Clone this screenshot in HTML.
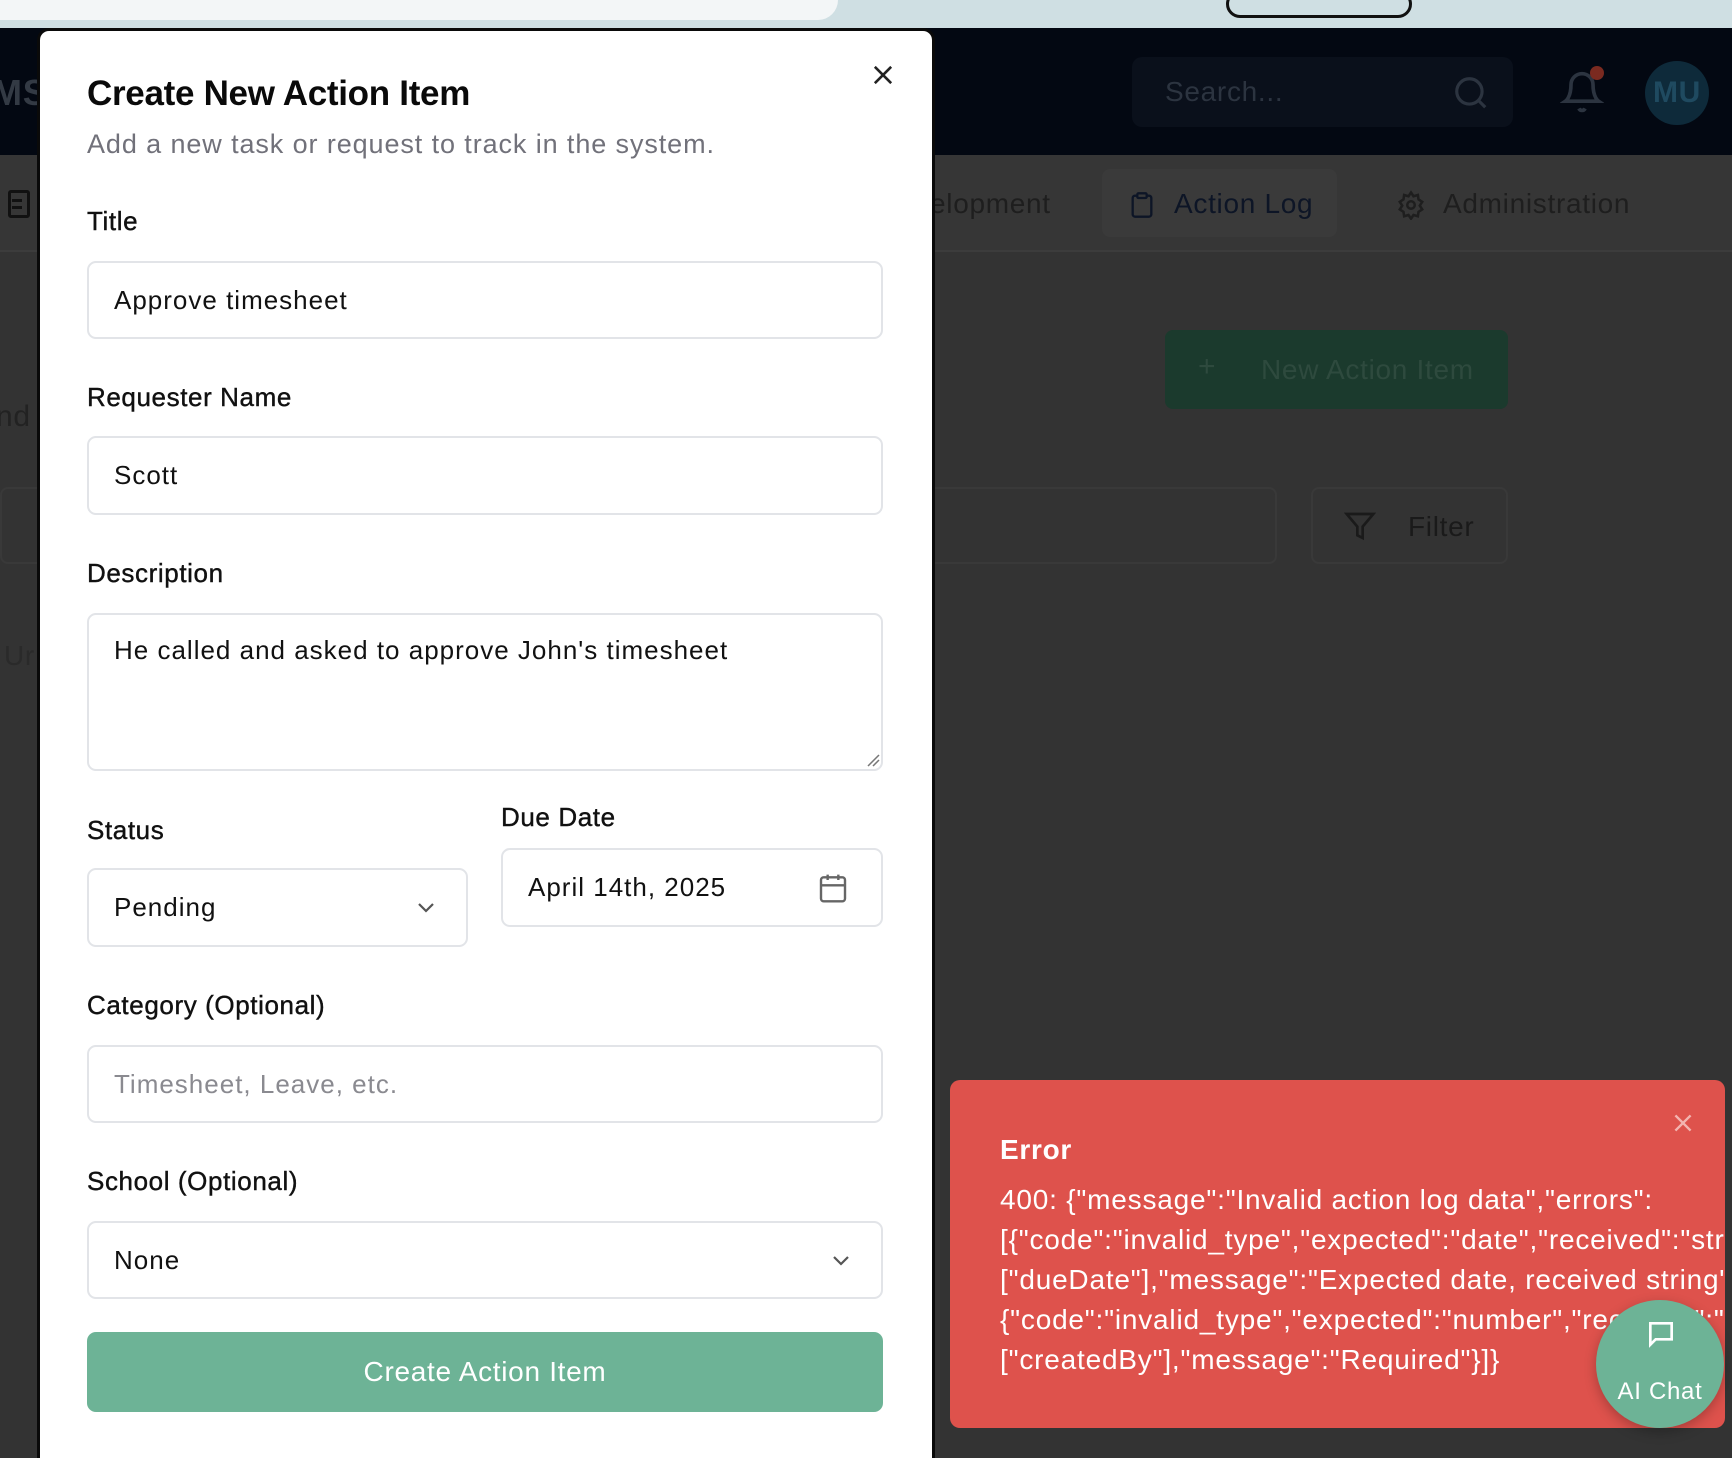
<!DOCTYPE html>
<html><head><meta charset="utf-8"><style>
*{box-sizing:border-box;margin:0;padding:0}
html{width:1732px;height:1458px;overflow:hidden}
body{width:1732px;height:1458px;overflow:hidden;background:#333;font-family:"Liberation Sans",sans-serif;position:relative;letter-spacing:0.7px}
.abs{position:absolute}
.lbl{position:absolute;left:87px;font-size:26px;font-weight:500;color:#111;letter-spacing:0.6px;-webkit-text-stroke:0.4px #111}
.inp{position:absolute;border:2px solid #e2e4e8;border-radius:9px;background:#fff;font-size:26px;color:#111;padding-left:25px;display:flex;align-items:center;letter-spacing:1px}
</style></head><body>
<!-- browser bar -->
<div class="abs" style="left:0;top:0;width:1732px;height:28px;background:#cfdfe3"></div>
<div class="abs" style="left:0;top:0;width:838px;height:20px;background:#f3f6f7;border-radius:0 0 20px 0"></div>
<div class="abs" style="left:1226px;top:-10px;width:186px;height:28px;border:3px solid #111;border-radius:14px"></div>
<!-- header -->
<div class="abs" style="left:0;top:28px;width:1732px;height:127px;background:#030812"></div>
<div class="abs" style="left:-8px;top:72px;font-size:36px;color:#333a44;font-weight:bold">MS</div>
<div class="abs" style="left:1132px;top:57px;width:381px;height:70px;background:#0a101b;border-radius:10px"></div>
<div class="abs" style="left:1165px;top:76px;font-size:28px;color:#2c3440">Search...</div>
<svg class="abs" style="left:1452px;top:74px" width="38" height="38" viewBox="0 0 24 24" fill="none" stroke="#2c3440" stroke-width="2"><circle cx="11" cy="11" r="8"/><path d="M21 21l-4.3-4.3"/></svg>
<svg class="abs" style="left:1560px;top:70px" width="44" height="44" viewBox="0 0 24 24" fill="none" stroke="#2c3440" stroke-width="2"><path d="M6 8a6 6 0 0 1 12 0c0 7 3 9 3 9H3s3-2 3-9"/><path d="M10.3 21a1.9 1.9 0 0 0 3.4 0"/></svg>
<div class="abs" style="left:1590px;top:66px;width:14px;height:14px;border-radius:50%;background:#7a2a20"></div>
<div class="abs" style="left:1645px;top:61px;width:64px;height:64px;border-radius:50%;background:#0e2a3a;color:#1f4a60;font-size:30px;font-weight:bold;display:flex;align-items:center;justify-content:center">MU</div>
<!-- nav -->
<div class="abs" style="left:0;top:155px;width:1732px;height:97px;background:#363636;border-bottom:2px solid #3c3c3c"></div>
<div class="abs" style="left:8px;top:190px;width:22px;height:28px;border:3px solid #111;border-radius:3px"></div>
<div class="abs" style="left:12px;top:199px;width:10px;height:3px;background:#111"></div>
<div class="abs" style="left:12px;top:206px;width:10px;height:3px;background:#111"></div>
<div class="abs" style="left:930px;top:188px;font-size:28px;color:#1e1e1e">elopment</div>
<div class="abs" style="left:1102px;top:169px;width:235px;height:68px;background:#3a3a3a;border-radius:8px"></div>
<svg class="abs" style="left:1128px;top:190px" width="28" height="30" viewBox="0 0 24 24" fill="none" stroke="#0d1526" stroke-width="2"><rect x="8" y="2" width="8" height="4" rx="1"/><path d="M16 4h2a2 2 0 0 1 2 2v14a2 2 0 0 1-2 2H6a2 2 0 0 1-2-2V6a2 2 0 0 1 2-2h2"/><path d="M9 12h.01M9 16h.01"/></svg>
<div class="abs" style="left:1174px;top:188px;font-size:28px;color:#0d1526;font-weight:500">Action Log</div>
<svg class="abs" style="left:1396px;top:190px" width="30" height="30" viewBox="0 0 24 24" fill="none" stroke="#1e1e1e" stroke-width="2"><circle cx="12" cy="12" r="3"/><path d="M12 2l2 3 3.5-1 .5 3.5 3 2-2 3 2 3-3 2-.5 3.5-3.5-1-2 3-2-3-3.5 1L6 17.5l-3-2 2-3-2-3 3-2 .5-3.5 3.5 1z"/></svg>
<div class="abs" style="left:1443px;top:188px;font-size:28px;color:#1e1e1e">Administration</div>
<!-- page bg items -->
<div class="abs" style="left:1165px;top:330px;width:343px;height:79px;background:#1b3a2d;border-radius:8px"></div>
<div class="abs" style="left:1198px;top:350px;font-size:30px;color:#2e4a3e">+</div>
<div class="abs" style="left:1261px;top:354px;font-size:28px;color:#2e4a3e">New Action Item</div>
<div class="abs" style="left:0;top:487px;width:1277px;height:77px;border:2px solid #393939;border-radius:8px"></div>
<div class="abs" style="left:1311px;top:487px;width:197px;height:77px;border:2px solid #393939;border-radius:8px"></div>
<svg class="abs" style="left:1344px;top:510px" width="32" height="32" viewBox="0 0 24 24" fill="none" stroke="#1a1a1a" stroke-width="2"><path d="M22 3H2l8 9.5V19l4 2v-8.5z"/></svg>
<div class="abs" style="left:1408px;top:511px;font-size:28px;color:#1a1a1a;font-weight:500">Filter</div>
<div class="abs" style="left:-4px;top:400px;font-size:30px;color:#222">nd</div>
<div class="abs" style="left:4px;top:640px;font-size:28px;color:#2a2a2a">Ur</div>
<!-- modal -->
<div class="abs" style="left:37px;top:28px;width:898px;height:1430px;background:#fff;border:3px solid #0a0a0a;border-bottom:none;border-radius:12px 12px 0 0"></div>
<div class="abs" style="left:87px;top:74px;font-size:35px;font-weight:bold;color:#0a0a0a;letter-spacing:-0.3px">Create New Action Item</div>
<div class="abs" style="left:87px;top:129px;font-size:27px;color:#71717a;letter-spacing:0.9px">Add a new task or request to track in the system.</div>
<svg class="abs" style="left:869px;top:61px" width="28" height="28" viewBox="0 0 24 24" fill="none" stroke="#222" stroke-width="2.2"><path d="M5 5l14 14M19 5L5 19"/></svg>
<div class="lbl" style="top:206px">Title</div>
<div class="inp" style="left:87px;top:261px;width:796px;height:78px">Approve timesheet</div>
<div class="lbl" style="top:382px">Requester Name</div>
<div class="inp" style="left:87px;top:436px;width:796px;height:79px">Scott</div>
<div class="lbl" style="top:558px">Description</div>
<div class="inp" style="left:87px;top:613px;width:796px;height:158px;align-items:flex-start;padding-top:20px">He called and asked to approve John's timesheet</div>
<svg class="abs" style="left:866px;top:753px" width="14" height="14" viewBox="0 0 14 14" stroke="#777" stroke-width="1.5"><path d="M2 13L13 2M7 13l6-6"/></svg>
<div class="lbl" style="top:815px">Status</div>
<div class="inp" style="left:87px;top:868px;width:381px;height:79px">Pending</div>
<svg class="abs" style="left:414px;top:898px" width="24" height="20" viewBox="0 0 24 20" fill="none" stroke="#555" stroke-width="2.2"><path d="M5 6l7 7 7-7"/></svg>
<div class="lbl" style="left:501px;top:802px">Due Date</div>
<div class="inp" style="left:501px;top:848px;width:382px;height:79px">April 14th, 2025</div>
<svg class="abs" style="left:817px;top:872px" width="32" height="32" viewBox="0 0 24 24" fill="none" stroke="#666" stroke-width="1.8"><rect x="3" y="4" width="18" height="18" rx="2"/><path d="M16 2v4M8 2v4M3 10h18"/></svg>
<div class="lbl" style="top:990px">Category (Optional)</div>
<div class="inp" style="left:87px;top:1045px;width:796px;height:78px;color:#8a8a90">Timesheet, Leave, etc.</div>
<div class="lbl" style="top:1166px">School (Optional)</div>
<div class="inp" style="left:87px;top:1221px;width:796px;height:78px">None</div>
<svg class="abs" style="left:829px;top:1251px" width="24" height="20" viewBox="0 0 24 20" fill="none" stroke="#555" stroke-width="2.2"><path d="M5 6l7 7 7-7"/></svg>
<div class="abs" style="left:87px;top:1332px;width:796px;height:80px;background:#6db396;border-radius:9px;color:#fff;font-size:28px;font-weight:500;display:flex;align-items:center;justify-content:center">Create Action Item</div>
<!-- toast -->
<div class="abs" style="left:950px;top:1080px;width:775px;height:348px;background:#de524c;border-radius:10px;overflow:hidden">
<svg class="abs" style="left:720px;top:30px" width="26" height="26" viewBox="0 0 24 24" fill="none" stroke="#f3b4b0" stroke-width="2.2"><path d="M5 5l14 14M19 5L5 19"/></svg>
<div class="abs" style="left:50px;top:54px;font-size:28px;font-weight:bold;color:#fff">Error</div>
<div class="abs" style="left:50px;top:100px;font-size:28px;line-height:40px;color:#fff;white-space:pre;letter-spacing:0.8px">400: {"message":"Invalid action log data","errors":
[{"code":"invalid_type","expected":"date","received":"string","path":
["dueDate"],"message":"Expected date, received string"},
{"code":"invalid_type","expected":"number","received":"undefined","path":
["createdBy"],"message":"Required"}]}</div>
</div>
<div class="abs" style="left:1596px;top:1300px;width:128px;height:128px;border-radius:50%;background:#6db396;box-shadow:0 4px 12px rgba(0,0,0,.25)"></div>
<svg class="abs" style="left:1645px;top:1318px" width="32" height="32" viewBox="0 0 24 24" fill="none" stroke="#fff" stroke-width="2"><path d="M4 4h16v12H8l-4 4z"/></svg>
<div class="abs" style="left:1596px;top:1378px;width:128px;text-align:center;font-size:24px;color:#fff;font-weight:500">AI Chat</div>
</body></html>
